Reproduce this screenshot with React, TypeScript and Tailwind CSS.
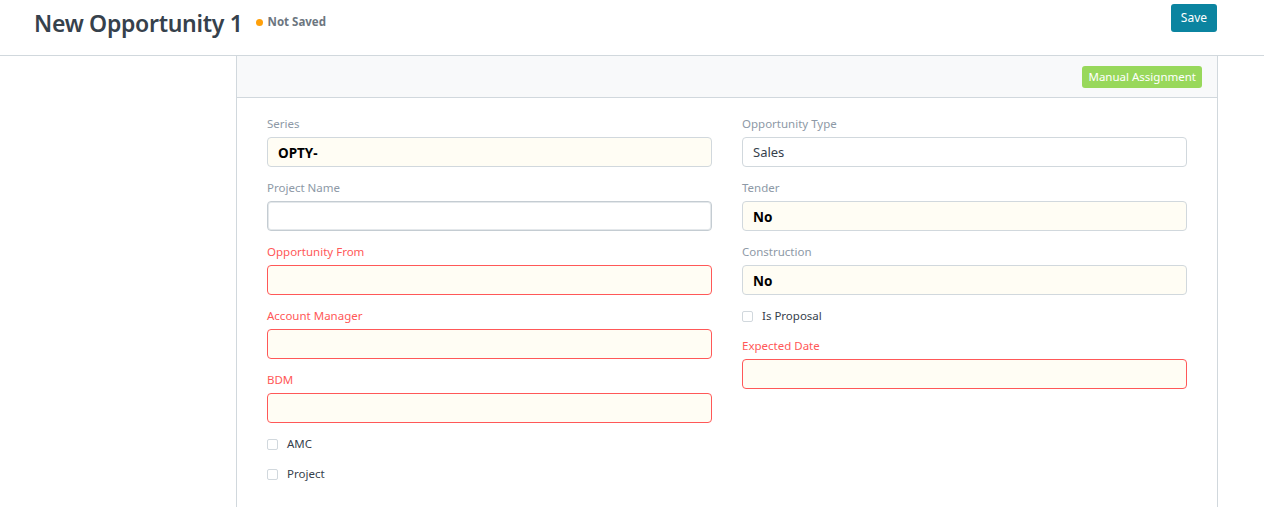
import React from "react";

const Label = ({ text, required }: { text: string; required?: boolean }) => (
  <div
    className={
      "h-[18px] leading-[18px] text-[11.5px] mb-[4px] " +
      (required ? "text-[#ff5858]" : "text-[#8d99a6]")
    }
  >
    {text}
  </div>
);

type InputKind = "ro" | "white" | "focus" | "req";

const Input = ({ value, kind, bold }: { value?: string; kind: InputKind; bold?: boolean }) => {
  const cls =
    kind === "ro"
      ? "bg-[#fffdf4] border-[#d1d8dd]"
      : kind === "white"
      ? "bg-white border-[#d1d8dd]"
      : kind === "focus"
      ? "bg-white border-[#c4ccd2] shadow-[inset_0_0_0_1px_#e4e8eb]"
      : "bg-[#fffdf4] border-[#ff5858]";
  return (
    <div
      className={
        "h-[30px] border rounded-[4px] px-[10px] pt-[2px] flex items-center " +
        cls +
        (bold ? " font-bold text-black text-[13.5px]" : " text-[#36414c] text-[13px]")
      }
    >
      {value}
    </div>
  );
};

const Field = ({
  label,
  value,
  kind,
  bold,
  required,
}: {
  label: string;
  value?: string;
  kind: InputKind;
  bold?: boolean;
  required?: boolean;
}) => (
  <div className="mb-[12px]">
    <Label text={label} required={required} />
    <Input value={value} kind={kind} bold={bold} />
  </div>
);

const Check = ({ label }: { label: string }) => (
  <div className="h-[18px] mb-[12px] flex items-center text-[11.5px] text-[#36414c]">
    <span className="w-[11px] h-[11px] border border-[#d1d8dd] rounded-[2px] bg-white" />
    <span className="ml-[9px]">{label}</span>
  </div>
);

export default function App() {
  return (
    <div className="min-h-[507px] bg-white font-['Noto_Sans',_'Open_Sans',_sans-serif] text-[#36414c]">
      <header className="h-[56px] border-b border-[#d1d8dd] flex justify-between items-start pl-[34px] pr-[47px]">
        <div className="flex items-center h-[46px]">
          <span className="text-[23px] font-semibold text-[#36414c] leading-none tracking-[-0.3px]">
            New Opportunity 1
          </span>
          <span className="ml-[13px] w-[7px] h-[7px] rounded-full bg-[#ffa00a] mb-[2px]" />
          <span className="ml-[5px] text-[11.5px] font-bold text-[#6c7680] mb-[2px]">Not Saved</span>
        </div>
        <button className="mt-[4px] h-[28px] px-[10px] rounded-[3px] bg-[#0b84a0] text-white text-[12px]">
          Save
        </button>
      </header>
      <div className="flex">
        <div className="w-[236px] shrink-0" />
        <div className="w-[982px] shrink-0 border-x border-[#d1d8dd] min-h-[451px]">
          <div className="h-[42px] bg-[#f8f9fa] border-b border-[#d1d8dd] flex justify-end items-center pr-[15px]">
            <button className="h-[22px] px-[6px] rounded-[3px] bg-[#98d85b] text-white text-[11.5px] leading-none mt-[1px]">
              Manual Assignment
            </button>
          </div>
          <div className="grid grid-cols-2 gap-x-[30px] px-[30px] pt-[17px]">
            <div>
              <Field label="Series" value="OPTY-" kind="ro" bold />
              <Field label="Project Name" kind="focus" />
              <Field label="Opportunity From" kind="req" required />
              <Field label="Account Manager" kind="req" required />
              <Field label="BDM" kind="req" required />
              <Check label="AMC" />
              <Check label="Project" />
            </div>
            <div>
              <Field label="Opportunity Type" value="Sales" kind="white" />
              <Field label="Tender" value="No" kind="ro" bold />
              <Field label="Construction" value="No" kind="ro" bold />
              <Check label="Is Proposal" />
              <Field label="Expected Date" kind="req" required />
            </div>
          </div>
        </div>
      </div>
    </div>
  );
}
